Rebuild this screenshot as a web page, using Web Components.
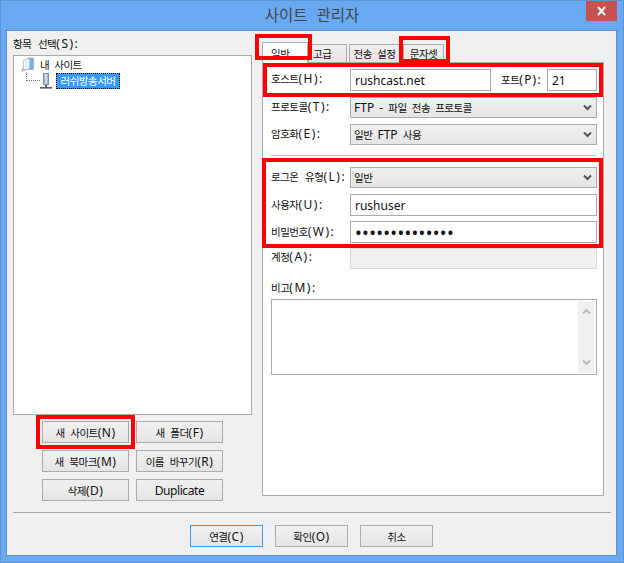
<!DOCTYPE html>
<html><head><meta charset="utf-8"><style>
html,body{margin:0;padding:0;width:624px;height:563px;overflow:hidden;background:#69a9f2}
</style></head><body>
<site-manager></site-manager>
<script>
const FONT = `"Noto Sans","Noto Sans CJK KR",sans-serif`;
const KR = `.k{font-size:10.5px;letter-spacing:-.5px}`;
const wrapKr = s => s.replace(/[\uAC00-\uD7A3]+/g, m => `<span class="k">${m}</span>`);
function def(name, css, html){
  customElements.define(name, class extends HTMLElement{
    constructor(){super();const r=this.attachShadow({mode:'open'});r.innerHTML=`<style>${KR}${css}</style>${wrapKr(html)}`;}
  });
}
def('win-button',`
:host{display:flex;align-items:center;justify-content:center;box-sizing:border-box;height:22px;border:1px solid #acacac;background:linear-gradient(#f0f0f0,#e5e5e5);font-size:12px;color:#111;white-space:nowrap;letter-spacing:.5px}
:host([default]){border-color:#3c9cf0}
`,`<span><slot></slot></span>`);
def('win-field',`
:host{display:flex;align-items:center;box-sizing:border-box;height:22px;border:1px solid #ababab;background:#fff;padding:0 4px;font-size:12px;color:#111;white-space:nowrap}
:host([disabled]){background:#f0f0f0;border-color:#d9d9d9;height:21px}
`,`<span><slot></slot></span>`);
def('win-select',`
:host{display:flex;align-items:center;justify-content:space-between;box-sizing:border-box;height:21px;border:1px solid #acacac;background:linear-gradient(#f0f0f0,#e5e5e5);padding:0 4px 1px 3px;font-size:12px;color:#111;white-space:nowrap}
svg{display:block}
`,`<span><slot></slot></span><svg width="9" height="7" viewBox="0 0 9 7"><path d="M1 1.500l3.500 3.500 3.500-3.500" fill="none" stroke="#555" stroke-width="2"/></svg>`);
def('win-tab',`
:host{display:flex;align-items:center;justify-content:center;box-sizing:border-box;height:18px;border:1px solid #acacac;border-bottom:0;background:linear-gradient(#f0f0f0,#e5e5e5);font-size:12px;color:#111;white-space:nowrap}
:host([active]){height:21px;background:#fff;margin-bottom:-1px;z-index:1;position:relative;justify-content:flex-start;padding:0 0 0 8px}
:host([tuck]){justify-content:flex-start;padding-left:4px}
`,`<span><slot></slot></span>`);
def('red-mark',`
:host{display:block;position:absolute;box-sizing:border-box;border:4px solid #f00;pointer-events:none;z-index:5}
`,``);
def('site-tree',`
:host{display:block;box-sizing:border-box;width:239px;height:360px;border:1px solid #ababab;background:#fff;font-size:12px;color:#111;word-spacing:2px}
.row{display:flex;align-items:center}
.r1{height:17px;padding-left:6px}
.r2{height:16px;padding-left:12px}
.lbl{margin-left:5px}
.sel{background:#3399ff;color:#fff;outline:1px dotted #000;outline-offset:-1px;padding:0 2px;margin-left:4px;height:16px;line-height:16px;width:60px;text-align:center}
.sel .k,.sel{font-size:10.5px}
.dots{width:14px;height:8px;border-left:1px dotted #777;border-bottom:1px dotted #777;margin-top:-8px;margin-right:0;flex:none;box-sizing:border-box}
svg{display:block;flex:none}
`,`
<div class="row r1"><svg width="15" height="16" viewBox="0 0 15 16"><path d="M1 15l6-2v-3H3z" fill="#aab3c0"/><path d="M3.500 13V3.500L8 1h5.500v11.500H8z" fill="#eef3fa" stroke="#aebccf" stroke-width=".8"/><path d="M8 1h5.500v11.500H8l1.500-2V3z" fill="#79aee8"/></svg><span class="lbl">내 사이트</span></div>
<div class="row r2"><span class="dots"></span><svg width="12" height="16" viewBox="0 0 12 16"><rect x="3.500" y=".5" width="5" height="11" fill="#a9b6cb" stroke="#7e8ea8"/><rect x="5.300" y="1" width="1.400" height="10" fill="#e3e9f3"/><rect x="5" y="12" width="2" height="2" fill="#555f70"/><rect x="0" y="14" width="12" height="1.600" fill="#55606f"/></svg><span class="sel">러쉬방송서버</span></div>
`);
def('site-manager',`
:host{display:block;box-sizing:border-box;position:relative;width:624px;height:563px;border:1px solid #5f95d2;background:#69a9f2;font-family:${FONT};font-size:12px;color:#111;word-spacing:2px}
.title{box-sizing:border-box;height:29px;padding-bottom:2px;display:flex;align-items:center;justify-content:center;font-size:15px;color:#41464d;word-spacing:5px}
.title .k{font-size:15.5px;letter-spacing:0}
.close{position:absolute;right:6px;top:0;width:31px;height:20px;background:#c75050;display:flex;align-items:center;justify-content:center}
.body{box-sizing:border-box;margin:0 5px;width:611px;height:526px;background:#f0f0f0;border:1px solid #5b90cd;padding:0 5px 0 6px;display:flex;flex-direction:column}
.main{display:flex;height:481px}
.left{width:239px;margin-right:10px;display:flex;flex-direction:column}
.leftlbl{height:24px;display:flex;align-items:center;letter-spacing:1.5px}
.btns{display:grid;grid-template-columns:87px 87px;column-gap:7px;row-gap:7px;margin:6px 0 0 29px}
.right{width:342px;display:flex;flex-direction:column;padding-top:11px}
.tabs{display:flex;align-items:flex-end;height:20px}
.panel{box-sizing:border-box;height:434px;border:1px solid #ababab;background:#fff;padding:6px 6px 0 8px}
.row{display:flex;align-items:center}
.lab{width:79px;flex:none;white-space:nowrap;letter-spacing:1.5px;padding-bottom:2px}
.lab.up{padding-bottom:3px}
.port{margin-left:10px;width:46px;white-space:nowrap;letter-spacing:1.2px;padding-bottom:2px}
hr{border:0;border-top:1px solid #bcbcbc;margin:10px 0 11px;height:0;width:325px}
.dots{font-size:18px;letter-spacing:.3px;word-spacing:0}
.notelbl{margin:9px 0 1px;height:20px;line-height:20px;letter-spacing:1.5px}
.note{box-sizing:border-box;height:76px;border:1px solid #ababab;background:#fff;display:flex;justify-content:flex-end;padding:1px}
.sb{width:16px;background:#f0f0f0;margin-right:1px;display:flex;flex-direction:column;justify-content:space-between;align-items:center;padding:7px 0;box-sizing:border-box}
.sep{height:0;border-top:1px solid #a9a9a9}
.foot{display:flex;gap:12px;padding:12px 0 0 177px}
.foot win-button{width:73px}
`,`
<div class="title"><span>사이트 관리자</span></div>
<div class="close"><svg width="11" height="10" viewBox="0 0 11 10"><path d="M2 1l7 8M9 1l-7 8" stroke="#fff" stroke-width="2" fill="none"/></svg></div>
<div class="body">
  <div class="main">
    <div class="left">
      <div class="leftlbl"><span>항목 선택(S):</span></div>
      <site-tree></site-tree>
      <div class="btns">
        <win-button>새 사이트(N)</win-button><win-button>새 폴더(F)</win-button>
        <win-button>새 북마크(M)</win-button><win-button>이름 바꾸기(R)</win-button>
        <win-button>삭제(D)</win-button><win-button style="letter-spacing:-.4px">Duplicate</win-button>
      </div>
    </div>
    <div class="right">
      <div class="tabs">
        <win-tab active style="width:46px">일반</win-tab>
        <win-tab tuck style="width:39px">고급</win-tab>
        <win-tab style="width:51px;margin-left:2px">전송 설정</win-tab>
        <win-tab style="width:41px;margin-left:3px">문자셋</win-tab>
      </div>
      <div class="panel">
        <div class="row"><span class="lab up">호스트(H):</span><win-field style="width:141px">rushcast.net</win-field><span class="port">포트(P):</span><win-field style="width:50px">21</win-field></div>
        <div class="row" style="margin-top:6px"><span class="lab up">프로토콜(T):</span><win-select style="width:247px">FTP - 파일 전송 프로토콜</win-select></div>
        <div class="row" style="margin-top:6px"><span class="lab up">암호화(E):</span><win-select style="width:247px">일반 FTP 사용</win-select></div>
        <hr>
        <div class="row"><span class="lab">로그온 유형(L):</span><win-select style="width:247px">일반</win-select></div>
        <div class="row" style="margin-top:6px"><span class="lab">사용자(U):</span><win-field style="width:247px">rushuser</win-field></div>
        <div class="row" style="margin-top:5px"><span class="lab">비밀번호(W):</span><win-field style="width:247px"><span class="dots">••••••••••••••</span></win-field></div>
        <div class="row" style="margin-top:5px"><span class="lab" style="align-self:flex-start">계정(A):</span><win-field disabled style="width:247px"></win-field></div>
        <div class="notelbl">비고(M):</div>
        <div class="note"><div class="sb"><svg width="9" height="7" viewBox="0 0 9 7"><path d="M1 5.500L4.500 2 8 5.500" fill="none" stroke="#bcbcbc" stroke-width="2"/></svg><svg width="9" height="7" viewBox="0 0 9 7"><path d="M1 1.500l3.500 3.500 3.500-3.500" fill="none" stroke="#bcbcbc" stroke-width="2"/></svg></div></div>
      </div>
    </div>
  </div>
  <div class="sep"></div>
  <div class="foot">
    <win-button default>연결(C)</win-button><win-button>확인(O)</win-button><win-button>취소</win-button>
  </div>
</div>
<red-mark style="left:254px;top:33px;width:57px;height:26px"></red-mark>
<red-mark style="left:262px;top:62px;width:340px;height:34px"></red-mark>
<red-mark style="left:398px;top:35px;width:51px;height:27px"></red-mark>
<red-mark style="left:261px;top:157px;width:341px;height:90px"></red-mark>
<red-mark style="left:35px;top:414px;width:99px;height:34px"></red-mark>
`);
</script>
</body></html>
